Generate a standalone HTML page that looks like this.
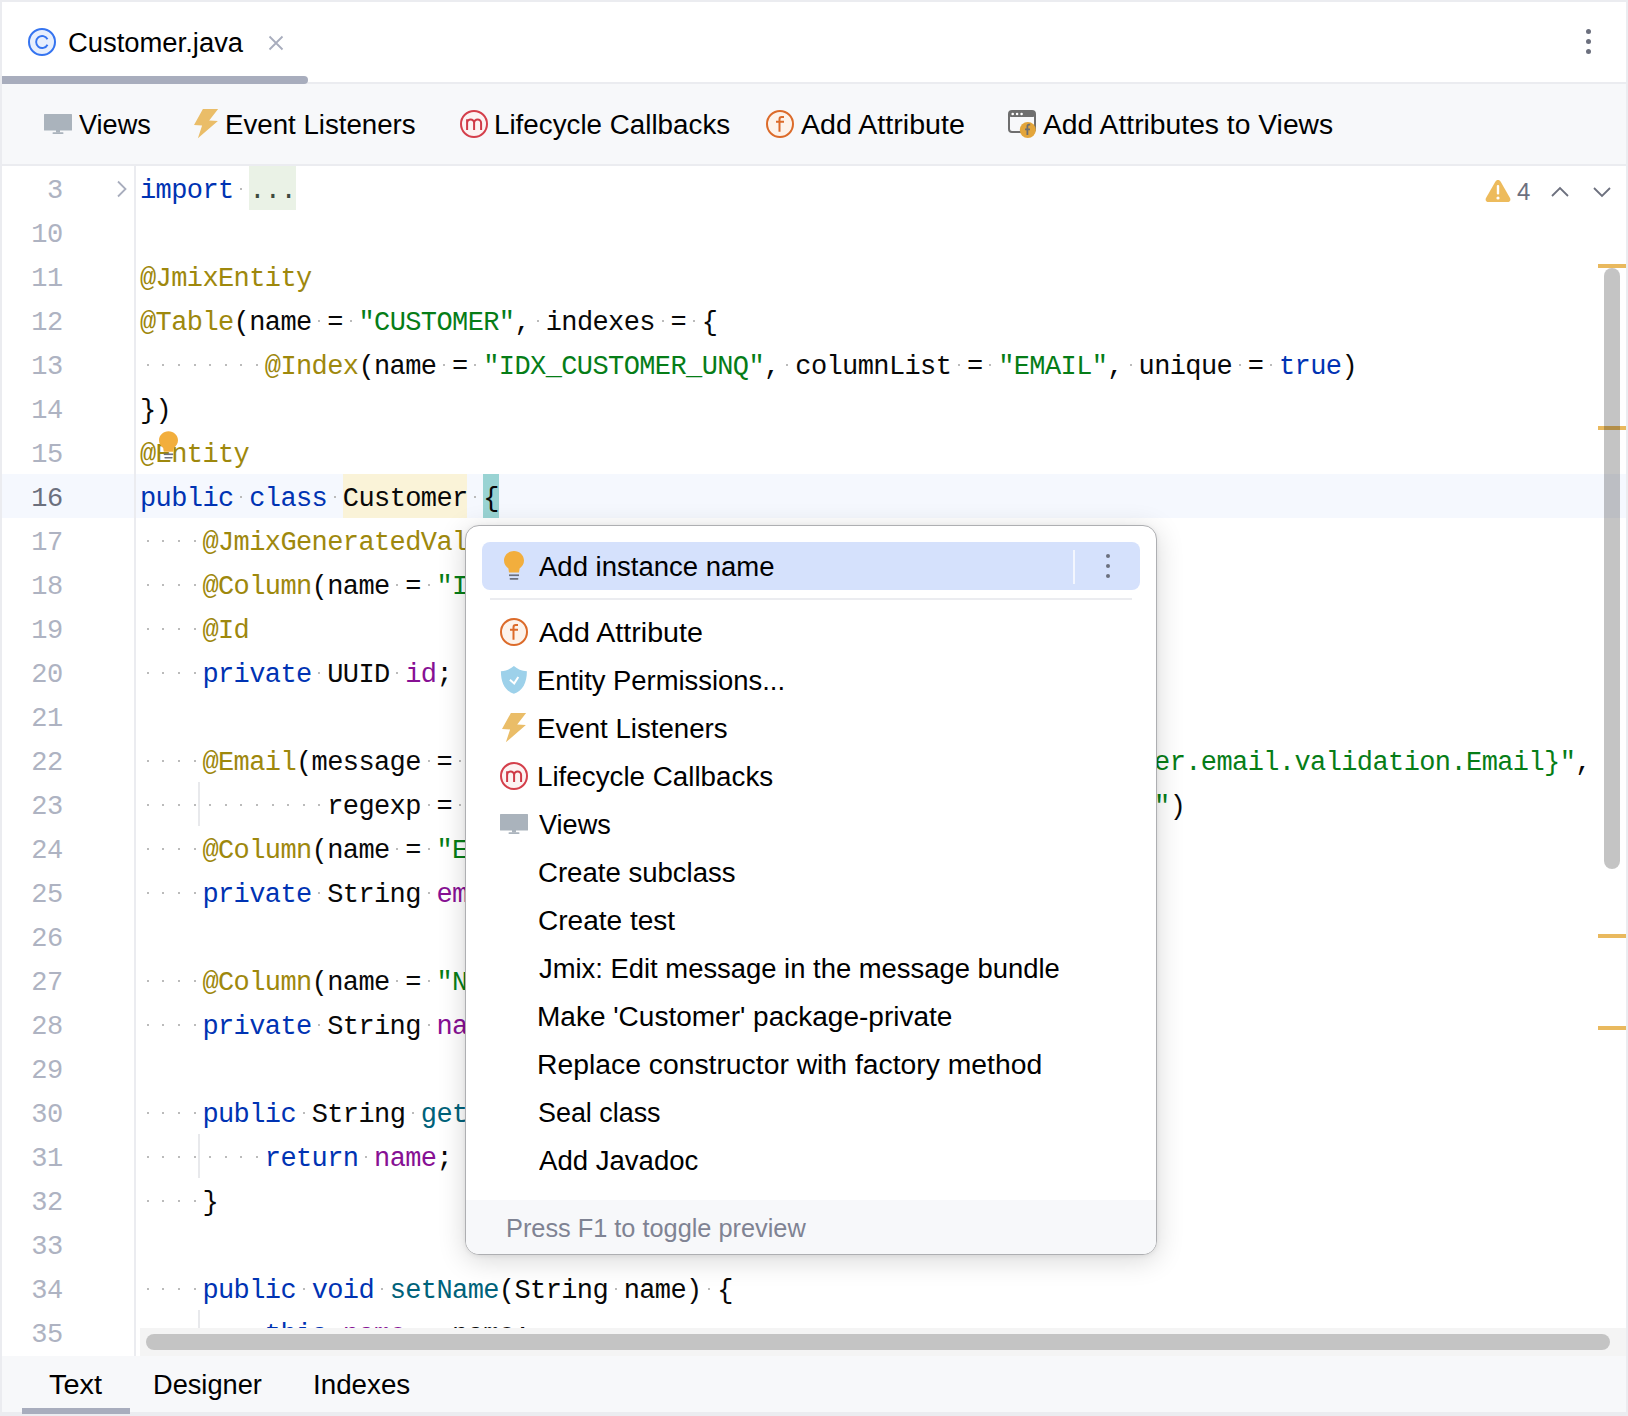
<!DOCTYPE html><html><head><meta charset="utf-8"><style>
*{margin:0;padding:0;box-sizing:border-box}
html,body{width:1628px;height:1416px;overflow:hidden;background:#EBECF0}
body{position:relative;font-family:"Liberation Sans", sans-serif}
.abs{position:absolute}
.win{position:absolute;left:2px;top:2px;width:1624px;height:1410px;background:#fff;overflow:hidden}
.t{position:absolute;white-space:nowrap;line-height:0;transform-origin:0 0}
.ln{position:absolute;left:140.0px;height:44px;line-height:44px;font-family:"Liberation Mono", monospace;font-size:27px;letter-spacing:-0.6026px;white-space:pre;color:#080808}
.num{position:absolute;left:0;width:62.5px;text-align:right;height:44px;line-height:44px;font-family:"Liberation Mono", monospace;font-size:27px;letter-spacing:-0.6026px;color:#AEB3C2;white-space:pre}
.num.cur{color:#6C707E}
.kw{color:#0033B3} .ann{color:#9E880D} .str{color:#067D17} .fld{color:#871094} .mth{color:#00627A} .txt{color:#080808}
.ws{color:#C8C8C8}
.fold{color:#3E4A3E}
.cust{}
.brace{}
.g{}
#codewrap i{position:absolute;width:2px;height:2px;background:#BBBBBB}
</style></head><body><div class="win"><div class="abs" style="left:0;top:0;width:1624px;height:81px;background:#fff"></div><div class="abs" style="left:0;top:80px;width:1624px;height:2px;background:#EBECF0"></div><div class="abs" style="left:0;top:74px;width:306px;height:8px;background:#A8ADBD;border-radius:0 4px 4px 0"></div><svg class="abs" style="left:26px;top:26px" width="28" height="28" viewBox="0 0 28 28"><circle cx="14" cy="14" r="13" fill="#E7EFFD" stroke="#3574F0" stroke-width="2"/><path d="M19.5 11.3 A6.0 6.0 0 1 0 19.5 16.7" fill="none" stroke="#3574F0" stroke-width="1.9"/></svg><svg class="abs" style="left:266px;top:33px" width="16" height="16" viewBox="0 0 16 16"><path d="M1.5 1.5 L14.5 14.5 M14.5 1.5 L1.5 14.5" stroke="#A8ADBD" stroke-width="1.8"/></svg><div class="abs" style="left:1583.5px;top:27px;width:5px;height:5px;border-radius:50%;background:#6C707E"></div><div class="abs" style="left:1583.5px;top:37px;width:5px;height:5px;border-radius:50%;background:#6C707E"></div><div class="abs" style="left:1583.5px;top:47px;width:5px;height:5px;border-radius:50%;background:#6C707E"></div><div class="abs" style="left:0;top:82px;width:1624px;height:80px;background:#F7F8FA"></div><div class="abs" style="left:0;top:162px;width:1624px;height:2px;background:#EBECF0"></div><svg class="abs" style="left:42px;top:112px" width="30" height="22" viewBox="0 0 30 22"><rect x="0" y="0" width="28" height="16.5" rx="0.5" fill="#AAB3BC"/><rect x="12" y="16" width="4" height="2.5" fill="#AAB3BC"/><rect x="8.5" y="18.3" width="11" height="1.7" rx="0.8" fill="#AAB3BC"/></svg><svg class="abs" style="left:191px;top:107px" width="26" height="30" viewBox="0 0 26 30"><path d="M9.9 0 L25.1 0 L16.2 11.6 L24.9 12 L4.9 29.2 L9.1 16.4 L1 16 Z" fill="#EABD68"/></svg><svg class="abs" style="left:458px;top:108px" width="28" height="28" viewBox="0 0 28 28"><circle cx="14" cy="14" r="13" fill="#FCF3F3" stroke="#D43F4B" stroke-width="2"/><path d="M7.1 20 V9.3 M7.1 12.9 A3.5 3.5 0 0 1 14.1 12.9 V20 M14.1 12.9 A3.5 3.5 0 0 1 21.1 12.9 V20" fill="none" stroke="#CF3A47" stroke-width="2"/></svg><svg class="abs" style="left:764px;top:108px" width="28" height="28" viewBox="0 0 28 28"><circle cx="14" cy="14" r="13" fill="#FDF3EB" stroke="#DC6B2A" stroke-width="2"/><path d="M18 7 H15.7 Q13.5 7 13.5 9.2 V21.8 M10 11.7 H18" fill="none" stroke="#DC6B2A" stroke-width="2"/></svg><svg class="abs" style="left:1006px;top:108px" width="30" height="30" viewBox="0 0 30 30"><rect x="1" y="1" width="26" height="21" rx="3" fill="none" stroke="#6E6E6E" stroke-width="2"/><rect x="1" y="1" width="26" height="6" rx="2" fill="#6E6E6E"/><circle cx="4.7" cy="4" r="1.3" fill="#fff"/><circle cx="9.1" cy="4" r="1.3" fill="#fff"/><circle cx="13.6" cy="4" r="1.3" fill="#fff"/><circle cx="19.8" cy="20" r="8" fill="#E3A53A"/><path d="M22.2 14.7 H21 Q19.4 14.7 19.4 16.4 V25 M17 19.4 H22" fill="none" stroke="#6E6E6E" stroke-width="1.8"/></svg><div class="abs" style="left:0;top:472px;width:1624px;height:44px;background:#F5F8FE"></div><div class="abs" style="left:132px;top:164px;width:2px;height:1190px;background:#EBECF0"></div><div class="abs" style="left:247px;top:164px;width:47px;height:44px;background:#EAF2E6"></div><div class="abs" style="left:341px;top:472px;width:124px;height:44px;background:#FAF3D8"></div><div class="abs" style="left:481px;top:472px;width:15.8px;height:44px;background:#99D3D3"></div><div class="abs" style="left:196px;top:780px;width:2px;height:44px;background:#E8E9EC"></div><div class="abs" style="left:196px;top:1132px;width:2px;height:44px;background:#E8E9EC"></div><div class="abs" style="left:196px;top:1308px;width:2px;height:44px;background:#E8E9EC"></div><div class="abs" style="left:-2px;top:-2px;width:136px;height:1356px;overflow:hidden"><div class="num" style="top:169px">3</div><div class="num" style="top:213px">10</div><div class="num" style="top:257px">11</div><div class="num" style="top:301px">12</div><div class="num" style="top:345px">13</div><div class="num" style="top:389px">14</div><div class="num" style="top:433px">15</div><div class="num cur" style="top:477px">16</div><div class="num" style="top:521px">17</div><div class="num" style="top:565px">18</div><div class="num" style="top:609px">19</div><div class="num" style="top:653px">20</div><div class="num" style="top:697px">21</div><div class="num" style="top:741px">22</div><div class="num" style="top:785px">23</div><div class="num" style="top:829px">24</div><div class="num" style="top:873px">25</div><div class="num" style="top:917px">26</div><div class="num" style="top:961px">27</div><div class="num" style="top:1005px">28</div><div class="num" style="top:1049px">29</div><div class="num" style="top:1093px">30</div><div class="num" style="top:1137px">31</div><div class="num" style="top:1181px">32</div><div class="num" style="top:1225px">33</div><div class="num" style="top:1269px">34</div><div class="num" style="top:1313px">35</div></div><div id="codewrap" class="abs" style="left:-2px;top:-2px;width:1628px;height:1330px;overflow:hidden"><i style="left:240.40px;top:187.5px"></i><i style="left:318.40px;top:319.5px"></i><i style="left:349.60px;top:319.5px"></i><i style="left:536.80px;top:319.5px"></i><i style="left:661.60px;top:319.5px"></i><i style="left:692.80px;top:319.5px"></i><i style="left:146.80px;top:363.5px"></i><i style="left:162.40px;top:363.5px"></i><i style="left:178.00px;top:363.5px"></i><i style="left:193.60px;top:363.5px"></i><i style="left:209.20px;top:363.5px"></i><i style="left:224.80px;top:363.5px"></i><i style="left:240.40px;top:363.5px"></i><i style="left:256.00px;top:363.5px"></i><i style="left:443.20px;top:363.5px"></i><i style="left:474.40px;top:363.5px"></i><i style="left:786.40px;top:363.5px"></i><i style="left:958.00px;top:363.5px"></i><i style="left:989.20px;top:363.5px"></i><i style="left:1129.60px;top:363.5px"></i><i style="left:1238.80px;top:363.5px"></i><i style="left:1270.00px;top:363.5px"></i><i style="left:240.40px;top:495.5px"></i><i style="left:334.00px;top:495.5px"></i><i style="left:474.40px;top:495.5px"></i><i style="left:146.80px;top:539.5px"></i><i style="left:162.40px;top:539.5px"></i><i style="left:178.00px;top:539.5px"></i><i style="left:193.60px;top:539.5px"></i><i style="left:146.80px;top:583.5px"></i><i style="left:162.40px;top:583.5px"></i><i style="left:178.00px;top:583.5px"></i><i style="left:193.60px;top:583.5px"></i><i style="left:396.40px;top:583.5px"></i><i style="left:427.60px;top:583.5px"></i><i style="left:521.20px;top:583.5px"></i><i style="left:661.60px;top:583.5px"></i><i style="left:692.80px;top:583.5px"></i><i style="left:146.80px;top:627.5px"></i><i style="left:162.40px;top:627.5px"></i><i style="left:178.00px;top:627.5px"></i><i style="left:193.60px;top:627.5px"></i><i style="left:146.80px;top:671.5px"></i><i style="left:162.40px;top:671.5px"></i><i style="left:178.00px;top:671.5px"></i><i style="left:193.60px;top:671.5px"></i><i style="left:318.40px;top:671.5px"></i><i style="left:396.40px;top:671.5px"></i><i style="left:146.80px;top:759.5px"></i><i style="left:162.40px;top:759.5px"></i><i style="left:178.00px;top:759.5px"></i><i style="left:193.60px;top:759.5px"></i><i style="left:427.60px;top:759.5px"></i><i style="left:458.80px;top:759.5px"></i><i style="left:146.80px;top:803.5px"></i><i style="left:162.40px;top:803.5px"></i><i style="left:178.00px;top:803.5px"></i><i style="left:193.60px;top:803.5px"></i><i style="left:209.20px;top:803.5px"></i><i style="left:224.80px;top:803.5px"></i><i style="left:240.40px;top:803.5px"></i><i style="left:256.00px;top:803.5px"></i><i style="left:271.60px;top:803.5px"></i><i style="left:287.20px;top:803.5px"></i><i style="left:302.80px;top:803.5px"></i><i style="left:318.40px;top:803.5px"></i><i style="left:427.60px;top:803.5px"></i><i style="left:458.80px;top:803.5px"></i><i style="left:146.80px;top:847.5px"></i><i style="left:162.40px;top:847.5px"></i><i style="left:178.00px;top:847.5px"></i><i style="left:193.60px;top:847.5px"></i><i style="left:396.40px;top:847.5px"></i><i style="left:427.60px;top:847.5px"></i><i style="left:568.00px;top:847.5px"></i><i style="left:677.20px;top:847.5px"></i><i style="left:708.40px;top:847.5px"></i><i style="left:146.80px;top:891.5px"></i><i style="left:162.40px;top:891.5px"></i><i style="left:178.00px;top:891.5px"></i><i style="left:193.60px;top:891.5px"></i><i style="left:318.40px;top:891.5px"></i><i style="left:427.60px;top:891.5px"></i><i style="left:146.80px;top:979.5px"></i><i style="left:162.40px;top:979.5px"></i><i style="left:178.00px;top:979.5px"></i><i style="left:193.60px;top:979.5px"></i><i style="left:396.40px;top:979.5px"></i><i style="left:427.60px;top:979.5px"></i><i style="left:146.80px;top:1023.5px"></i><i style="left:162.40px;top:1023.5px"></i><i style="left:178.00px;top:1023.5px"></i><i style="left:193.60px;top:1023.5px"></i><i style="left:318.40px;top:1023.5px"></i><i style="left:427.60px;top:1023.5px"></i><i style="left:146.80px;top:1111.5px"></i><i style="left:162.40px;top:1111.5px"></i><i style="left:178.00px;top:1111.5px"></i><i style="left:193.60px;top:1111.5px"></i><i style="left:302.80px;top:1111.5px"></i><i style="left:412.00px;top:1111.5px"></i><i style="left:568.00px;top:1111.5px"></i><i style="left:146.80px;top:1155.5px"></i><i style="left:162.40px;top:1155.5px"></i><i style="left:178.00px;top:1155.5px"></i><i style="left:193.60px;top:1155.5px"></i><i style="left:209.20px;top:1155.5px"></i><i style="left:224.80px;top:1155.5px"></i><i style="left:240.40px;top:1155.5px"></i><i style="left:256.00px;top:1155.5px"></i><i style="left:365.20px;top:1155.5px"></i><i style="left:146.80px;top:1199.5px"></i><i style="left:162.40px;top:1199.5px"></i><i style="left:178.00px;top:1199.5px"></i><i style="left:193.60px;top:1199.5px"></i><i style="left:146.80px;top:1287.5px"></i><i style="left:162.40px;top:1287.5px"></i><i style="left:178.00px;top:1287.5px"></i><i style="left:193.60px;top:1287.5px"></i><i style="left:302.80px;top:1287.5px"></i><i style="left:380.80px;top:1287.5px"></i><i style="left:614.80px;top:1287.5px"></i><i style="left:708.40px;top:1287.5px"></i><i style="left:146.80px;top:1331.5px"></i><i style="left:162.40px;top:1331.5px"></i><i style="left:178.00px;top:1331.5px"></i><i style="left:193.60px;top:1331.5px"></i><i style="left:209.20px;top:1331.5px"></i><i style="left:224.80px;top:1331.5px"></i><i style="left:240.40px;top:1331.5px"></i><i style="left:256.00px;top:1331.5px"></i><i style="left:412.00px;top:1331.5px"></i><i style="left:443.20px;top:1331.5px"></i><div class="ln" style="top:169px"><span class="kw">import</span> <span class="fold">...</span></div><div class="ln" style="top:213px"></div><div class="ln" style="top:257px"><span class="ann">@JmixEntity</span></div><div class="ln" style="top:301px"><span class="ann">@Table</span><span class="txt">(name</span> <span class="txt">=</span> <span class="str">&quot;CUSTOMER&quot;</span><span class="txt">,</span> <span class="txt">indexes</span> <span class="txt">=</span> <span class="txt">{</span></div><div class="ln" style="top:345px">        <span class="ann">@Index</span><span class="txt">(name</span> <span class="txt">=</span> <span class="str">&quot;IDX_CUSTOMER_UNQ&quot;</span><span class="txt">,</span> <span class="txt">columnList</span> <span class="txt">=</span> <span class="str">&quot;EMAIL&quot;</span><span class="txt">,</span> <span class="txt">unique</span> <span class="txt">=</span> <span class="kw">true</span><span class="txt">)</span></div><div class="ln" style="top:389px"><span class="txt">})</span></div><div class="ln" style="top:433px"><span class="ann">@Entity</span></div><div class="ln" style="top:477px"><span class="kw">public</span> <span class="kw">class</span> <span class="cust">Customer</span> <span class="brace">{</span></div><div class="ln" style="top:521px">    <span class="ann">@JmixGeneratedValue</span></div><div class="ln" style="top:565px">    <span class="ann">@Column</span><span class="txt">(name</span> <span class="txt">=</span> <span class="str">&quot;ID&quot;</span><span class="txt">,</span> <span class="txt">nullable</span> <span class="txt">=</span> <span class="kw">false</span><span class="txt">)</span></div><div class="ln" style="top:609px">    <span class="ann">@Id</span></div><div class="ln" style="top:653px">    <span class="kw">private</span> <span class="txt">UUID</span> <span class="fld">id</span><span class="txt">;</span></div><div class="ln" style="top:697px"></div><div class="ln" style="top:741px">    <span class="ann">@Email</span><span class="txt">(message</span> <span class="txt">=</span> <span class="str">&quot;{msg://com.company.onboarding.entity/Customer.email.validation.Email}&quot;</span><span class="txt">,</span></div><div class="ln" style="top:785px">            <span class="txt">regexp</span> <span class="txt">=</span> <span class="str">&quot;^[a-zA-Z0-9._%+-]+@[a-zA-Z0-9.-]+\.[a-z]{2,&quot;</span><span class="txt">)</span></div><div class="ln" style="top:829px">    <span class="ann">@Column</span><span class="txt">(name</span> <span class="txt">=</span> <span class="str">&quot;EMAIL&quot;</span><span class="txt">,</span> <span class="txt">unique</span> <span class="txt">=</span> <span class="kw">true</span><span class="txt">)</span></div><div class="ln" style="top:873px">    <span class="kw">private</span> <span class="txt">String</span> <span class="fld">email</span><span class="txt">;</span></div><div class="ln" style="top:917px"></div><div class="ln" style="top:961px">    <span class="ann">@Column</span><span class="txt">(name</span> <span class="txt">=</span> <span class="str">&quot;NAME&quot;</span><span class="txt">)</span></div><div class="ln" style="top:1005px">    <span class="kw">private</span> <span class="txt">String</span> <span class="fld">name</span><span class="txt">;</span></div><div class="ln" style="top:1049px"></div><div class="ln" style="top:1093px">    <span class="kw">public</span> <span class="txt">String</span> <span class="mth">getName</span><span class="txt">()</span> <span class="txt">{</span></div><div class="ln" style="top:1137px">        <span class="kw">return</span> <span class="fld">name</span><span class="txt">;</span></div><div class="ln" style="top:1181px">    <span class="txt">}</span></div><div class="ln" style="top:1225px"></div><div class="ln" style="top:1269px">    <span class="kw">public</span> <span class="kw">void</span> <span class="mth">setName</span><span class="txt">(String</span> <span class="txt">name)</span> <span class="txt">{</span></div><div class="ln" style="top:1313px">        <span class="kw">this</span><span class="txt">.</span><span class="fld">name</span> <span class="txt">=</span> <span class="txt">name;</span></div></div><svg class="abs" style="left:114px;top:178px" width="12" height="18" viewBox="0 0 12 18"><path d="M2 1.5 L9.5 9 L2 16.5" fill="none" stroke="#A8ADBD" stroke-width="1.8"/></svg><svg class="abs" style="left:157px;top:429px" width="19" height="29" viewBox="0 0 20 30"><path d="M10 0 C15.5 0 20 4.2 20 9.6 C20 13 18.3 15.6 15.6 17.5 L15 21.5 L5 21.5 L4.4 17.5 C1.7 15.6 0 13 0 9.6 C0 4.2 4.5 0 10 0 Z" fill="#F2AE3D"/><rect x="5" y="23.4" width="10" height="1.7" fill="#6C707E"/><rect x="5.6" y="27" width="8.8" height="1.7" rx="0.8" fill="#6C707E"/></svg><svg class="abs" style="left:1483px;top:177px" width="26" height="24" viewBox="0 0 26 24"><path d="M13 1 C14.2 1 15 1.6 15.7 2.8 L25 19 C26 21 25 23 22.6 23 L3.4 23 C1 23 0 21 1 19 L10.3 2.8 C11 1.6 11.8 1 13 1 Z" fill="#EDBB5C"/><rect x="11.8" y="6" width="2.4" height="9.5" rx="1" fill="#fff"/><circle cx="13" cy="19" r="1.6" fill="#fff"/></svg><span class="t" style="left:1515.00px;top:190.00px;font-size:24px;color:#6C707E;">4</span><svg class="abs" style="left:1548px;top:183px" width="20" height="14" viewBox="0 0 20 14"><path d="M2 11 L10 3 L18 11" fill="none" stroke="#6C707E" stroke-width="1.8"/></svg><svg class="abs" style="left:1590px;top:183px" width="20" height="14" viewBox="0 0 20 14"><path d="M2 3 L10 11 L18 3" fill="none" stroke="#6C707E" stroke-width="1.8"/></svg><div class="abs" style="left:1596px;top:262px;width:28px;height:4px;background:#E9B95E"></div><div class="abs" style="left:1596px;top:424px;width:28px;height:4px;background:#E9B95E"></div><div class="abs" style="left:1596px;top:932px;width:28px;height:4px;background:#E9B95E"></div><div class="abs" style="left:1596px;top:1024px;width:28px;height:4px;background:#E9B95E"></div><div class="abs" style="left:1602px;top:266px;width:16px;height:601px;border-radius:8px;background:rgba(0,0,0,0.23)"></div><div class="abs" style="left:138px;top:1326px;width:1486px;height:28px;background:#F4F4F4"></div><div class="abs" style="left:144px;top:1332px;width:1464px;height:16px;border-radius:8px;background:#C4C4C4"></div><div class="abs" style="left:0;top:1354px;width:1624px;height:56px;background:#F7F8FA"></div><div class="abs" style="left:463px;top:523px;width:692px;height:730px;border-radius:14px;background:#fff;border:1px solid #AEAFB2;box-shadow:0 5px 28px rgba(0,0,0,0.16), 0 1px 5px rgba(0,0,0,0.07);overflow:hidden"><div class="abs" style="left:0;top:674px;width:100%;height:60px;background:#F7F8FA"></div></div><div class="abs" style="left:480px;top:540px;width:658px;height:48px;border-radius:8px;background:#D5E1FC"></div><div class="abs" style="left:1071px;top:548px;width:2px;height:34px;background:#F3F6FE"></div><div class="abs" style="left:1103.8px;top:551.8px;width:4.4px;height:4.4px;border-radius:50%;background:#6C707E"></div><div class="abs" style="left:1103.8px;top:561.8px;width:4.4px;height:4.4px;border-radius:50%;background:#6C707E"></div><div class="abs" style="left:1103.8px;top:571.8px;width:4.4px;height:4.4px;border-radius:50%;background:#6C707E"></div><div class="abs" style="left:488px;top:596px;width:642px;height:2px;background:#EBECF0"></div><svg class="abs" style="left:502px;top:549px" width="20" height="30" viewBox="0 0 20 30"><path d="M10 0 C15.5 0 20 4.2 20 9.6 C20 13 18.3 15.6 15.6 17.5 L15 21.5 L5 21.5 L4.4 17.5 C1.7 15.6 0 13 0 9.6 C0 4.2 4.5 0 10 0 Z" fill="#F2AE3D"/><rect x="5" y="23.4" width="10" height="1.7" fill="#6C707E"/><rect x="5.6" y="27" width="8.8" height="1.7" rx="0.8" fill="#6C707E"/></svg><svg class="abs" style="left:498px;top:616px" width="28" height="28" viewBox="0 0 28 28"><circle cx="14" cy="14" r="13" fill="#FDF3EB" stroke="#DC6B2A" stroke-width="2"/><path d="M18 7 H15.7 Q13.5 7 13.5 9.2 V21.8 M10 11.7 H18" fill="none" stroke="#DC6B2A" stroke-width="2"/></svg><svg class="abs" style="left:498px;top:664px" width="28" height="30" viewBox="0 0 28 30"><path d="M13.9 0 C17.5 3 21.5 5 26.9 5.2 C26.9 17 22.5 25 13.9 27.8 C5.3 25 0.9 17 0.9 5.2 C6.3 5 10.3 3 13.9 0 Z" fill="#9DD1EA"/><path d="M9.9 13.7 L14.2 17.4 L18.3 11" fill="none" stroke="#fff" stroke-width="2"/></svg><svg class="abs" style="left:499px;top:711px" width="26" height="30" viewBox="0 0 26 30"><path d="M9.9 0 L25.1 0 L16.2 11.6 L24.9 12 L4.9 29.2 L9.1 16.4 L1 16 Z" fill="#EABD68"/></svg><svg class="abs" style="left:498px;top:760px" width="28" height="28" viewBox="0 0 28 28"><circle cx="14" cy="14" r="13" fill="#FCF3F3" stroke="#D43F4B" stroke-width="2"/><path d="M7.1 20 V9.3 M7.1 12.9 A3.5 3.5 0 0 1 14.1 12.9 V20 M14.1 12.9 A3.5 3.5 0 0 1 21.1 12.9 V20" fill="none" stroke="#CF3A47" stroke-width="2"/></svg><svg class="abs" style="left:498px;top:812px" width="30" height="22" viewBox="0 0 30 22"><rect x="0" y="0" width="28" height="16.5" rx="0.5" fill="#AAB3BC"/><rect x="12" y="16" width="4" height="2.5" fill="#AAB3BC"/><rect x="8.5" y="18.3" width="11" height="1.7" rx="0.8" fill="#AAB3BC"/></svg></div><span class="t" style="left:68.39px;top:43.20px;font-size:27px;color:#000;transform:scaleX(1.0145);">Customer.java</span><span class="t" style="left:79.40px;top:125.10px;font-size:27px;color:#000;transform:scaleX(1.0042);">Views</span><span class="t" style="left:225.45px;top:125.10px;font-size:27px;color:#000;transform:scaleX(1.0240);">Event Listeners</span><span class="t" style="left:493.54px;top:125.10px;font-size:27px;color:#000;transform:scaleX(1.0286);">Lifecycle Callbacks</span><span class="t" style="left:801.20px;top:125.10px;font-size:27px;color:#000;transform:scaleX(1.0597);">Add Attribute</span><span class="t" style="left:1043.20px;top:125.10px;font-size:27px;color:#000;transform:scaleX(1.0469);">Add Attributes to Views</span><span class="t" style="left:539.20px;top:567.20px;font-size:27px;color:#000;transform:scaleX(1.0187);">Add instance name</span><span class="t" style="left:539.20px;top:633.00px;font-size:27px;color:#000;transform:scaleX(1.0597);">Add Attribute</span><span class="t" style="left:537.17px;top:681.00px;font-size:27px;color:#000;transform:scaleX(1.0142);">Entity Permissions...</span><span class="t" style="left:537.15px;top:729.00px;font-size:27px;color:#000;transform:scaleX(1.0240);">Event Listeners</span><span class="t" style="left:537.14px;top:777.00px;font-size:27px;color:#000;transform:scaleX(1.0286);">Lifecycle Callbacks</span><span class="t" style="left:539.20px;top:825.00px;font-size:27px;color:#000;transform:scaleX(1.0042);">Views</span><span class="t" style="left:538.18px;top:873.00px;font-size:27px;color:#000;transform:scaleX(1.0208);">Create subclass</span><span class="t" style="left:538.16px;top:921.00px;font-size:27px;color:#000;transform:scaleX(1.0382);">Create test</span><span class="t" style="left:539.20px;top:969.00px;font-size:27px;color:#000;transform:scaleX(1.0146);">Jmix: Edit message in the message bundle</span><span class="t" style="left:537.13px;top:1017.00px;font-size:27px;color:#000;transform:scaleX(1.0372);">Make &#x27;Customer&#x27; package-private</span><span class="t" style="left:537.10px;top:1065.00px;font-size:27px;color:#000;transform:scaleX(1.0487);">Replace constructor with factory method</span><span class="t" style="left:538.20px;top:1113.00px;font-size:27px;color:#000;transform:scaleX(0.9959);">Seal class</span><span class="t" style="left:539.20px;top:1161.00px;font-size:27px;color:#000;transform:scaleX(1.0205);">Add Javadoc</span><span class="t" style="left:505.71px;top:1227.50px;font-size:25.5px;color:#7F8393;transform:scaleX(0.9927);">Press F1 to toggle preview</span><div style="position:absolute;left:22px;top:1408px;width:108px;height:6px;background:#A8ADBD"></div><span class="t" style="left:48.80px;top:1385.00px;font-size:27px;color:#000;transform:scaleX(1.0700);">Text</span><span class="t" style="left:153.38px;top:1385.00px;font-size:27px;color:#000;transform:scaleX(1.0075);">Designer</span><span class="t" style="left:312.84px;top:1385.00px;font-size:27px;color:#000;transform:scaleX(1.0283);">Indexes</span></body></html>
